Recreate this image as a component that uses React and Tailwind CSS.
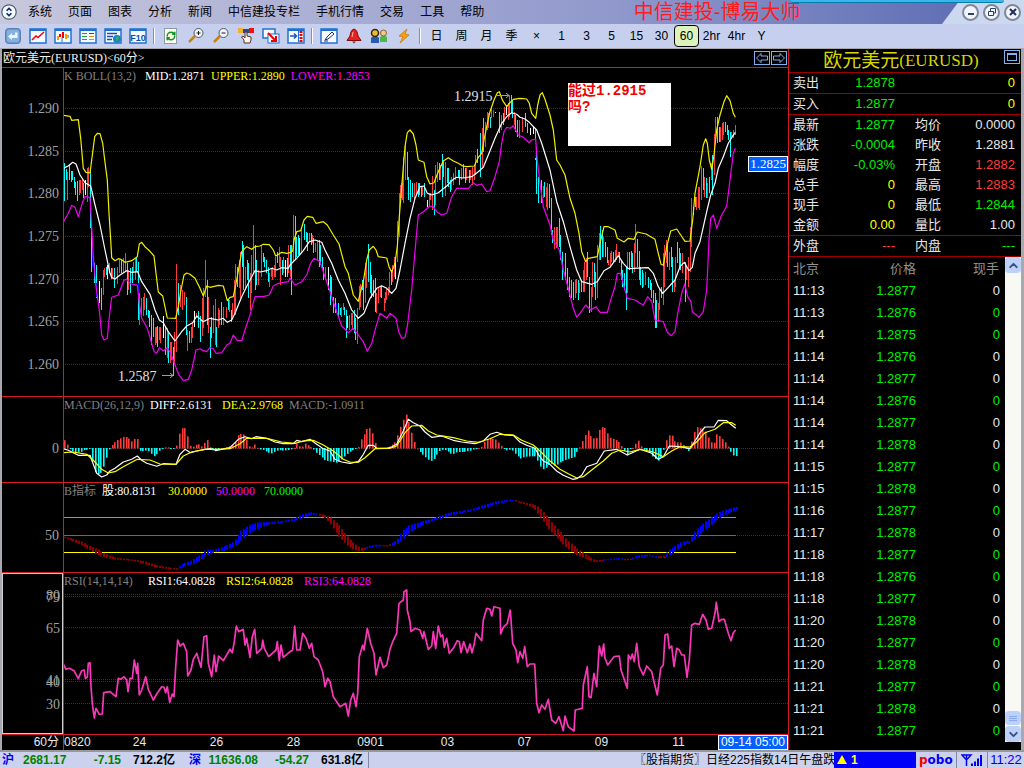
import { RefreshCw, ChevronUp, ChevronDown } from "lucide-react";

const CJK = "font-['Liberation_Sans','Noto_Sans_CJK_SC',sans-serif]";
const SERIF = "font-['Liberation_Serif','Noto_Sans_CJK_SC',serif]";

const RED = "#ff3c3c";
const CYAN = "#00ffff";
const BAR_COLORS = { r: RED, c: CYAN, w: "#ffffff", b: "#0000ff", d: "#900000" };

// Every series is a list of blocks: an origin in screen pixels
// and samples kept at three units per pixel.
const UPPER = [
  [60, 80, "10,106 30,109 35,121 55,119 62,175 70,265 78,277 90,279 95,240 104,170 112,160 120,161 128,190 133,230 142,300 147,400 152,480 155,533 165,542 175,536 182,538 195,547 215,542 232,530 238,492 245,487 255,500 270,514 282,528 288,580 295,636 308,648 322,714 347,715 355,680 362,635 372,585 380,579 390,583 405,595 420,625 430,648 440,618 450,622 475,616 490,618 496,640 502,662 510,652 520,650 530,600 545,515 560,500 575,508 585,500 600,498 610,493 628,494 640,510 647,528 665,517 680,520 690,518"],
  [290, 80, "8,513 12,480 20,455 32,452 42,420 52,409 68,412 78,430 100,425 112,435 130,465 147,492 165,560 175,580 190,645 205,664 213,630 220,605 230,540 238,510 250,499 258,510 265,530 290,534 297,560 305,577 315,550 322,500 328,410 336,310 345,200 352,158 360,150 370,162 378,195 385,240 402,247 410,290 420,312 432,308 445,275 460,243 475,233 490,243 505,250 518,258 530,260 553,258 565,232 575,220 582,180 590,140 600,95 612,60 622,38 628,35 638,62 650,80 658,70 670,58 690,55 710,57 718,70"],
  [500, 80, "95,100 107,115 113,75 120,45 127,38 135,58 150,105 160,150 170,240 180,255 195,285 210,355 225,400 237,460 245,515 257,545 265,535 292,530 300,490 312,440 325,440 345,450 352,475 372,486 385,475 402,478 412,456 438,462 465,478 475,520 483,553 490,556 500,500 512,453 530,447 542,465 555,484 570,483 578,420 585,340 600,260 610,195 617,176 622,190 628,240 635,268 642,225 650,150 660,105 672,65 680,47 690,62 700,100 706,112"],
];

const MID = [
  [60, 80, "10,265 25,258 38,247 48,252 60,285 75,308 92,318 105,375 120,435 135,510 150,580 155,592 165,597 180,585 200,572 215,577 233,575 245,605 270,643 285,690 298,720 310,728 325,755 345,783 365,755 380,738 398,728 410,708 430,725 450,715 475,720 490,715 502,727 515,720 525,700 545,650 565,610 585,572 600,576 620,572 635,565 650,570 665,563 685,565"],
  [290, 80, "0,555 20,535 40,512 58,485 75,480 95,487 105,510 125,550 145,600 165,640 185,690 205,715 222,700 240,655 260,625 275,617 290,625 305,640 318,625 330,570 345,490 360,415 375,355 390,320 402,318 412,340 425,345 445,338 470,318 490,298 500,292 520,294 545,290 565,275 580,262 597,220 615,175 635,130 652,108 665,98 680,103 690,112 705,117 718,127"],
  [500, 80, "110,150 125,190 150,270 170,365 190,425 210,500 230,570 245,605 275,613 292,605 312,572 330,562 355,527 370,550 385,566 445,563 460,580 475,620 488,640 505,622 525,600 540,560 553,547 567,572 577,562 585,520 600,485 620,395 632,345 645,310 655,265 670,230 685,190 697,170 706,157"],
];

const LOWER = [
  [60, 80, "10,427 25,400 35,376 45,382 55,410 68,365 75,350 90,352 95,440 100,530 108,620 118,690 125,765 132,780 142,775 148,710 155,652 175,645 192,600 200,598 212,612 232,615 238,670 245,715 262,745 275,790 283,815 290,820 298,803 310,812 322,803 332,820 345,855 357,885 370,902 385,898 395,870 408,810 420,806 430,812 440,815 450,803 460,806 468,820 485,818 500,795 510,790 520,765 532,782 545,782 555,750 570,705 585,650 610,650 628,645 640,618 655,610 685,605"],
  [290, 80, "0,594 15,615 35,605 50,585 62,550 72,535 90,545 100,575 120,635 140,695 155,738 175,758 190,745 205,765 220,785 232,814 245,790 258,740 270,700 290,715 300,700 318,715 326,755 335,775 345,773 352,740 365,630 378,480 385,405 400,395 420,378 430,380 440,395 455,405 470,400 485,350 500,325 535,325 550,308 560,316 575,312 590,335 600,332 615,290 628,245 635,190 642,155 650,142 660,145 670,137 685,165 700,172 718,188"],
  [500, 80, "95,180 107,177 112,240 120,310 130,380 150,435 160,480 178,510 190,570 205,625 220,685 230,712 240,700 257,675 272,690 288,680 300,697 322,697 335,650 345,620 352,580 362,580 372,620 382,655 405,660 430,676 443,650 455,665 465,720 490,725 502,757 513,767 525,755 533,700 545,640 554,612 563,650 573,665 577,695 597,712 610,695 620,630 627,480 632,415 640,405 650,445 665,405 680,378 690,300 700,220 706,205"],
];

// x, top, bottom, colour
const CANDLES = [
  [60, 80, "10,138,290,c 13,250,362,c 19,268,300,c 22,275,360,r 28,252,300,c 34,272,305,c 37,272,300,c 43,290,325,c 46,305,345,c 52,302,362,c 58,300,345,r 61,300,340,r 67,300,330,r 70,310,355,c 76,300,345,w 82,265,365,r 85,262,320,r 91,270,445,c 94,430,575,c 97,500,560,b 103,550,610,c 109,555,655,c 109,610,650,b 118,603,670,w 124,625,690,c 130,570,645,r 133,565,590,r 139,560,585,c 142,555,598,w 148,550,580,r 154,565,597,c 157,565,597,r 163,565,625,c 172,560,612,r 178,540,580,r 184,540,580,c 190,535,575,r 196,520,575,r 202,550,645,c 205,570,630,r 211,565,640,c 217,560,610,c 220,545,580,r 226,535,600,r 229,530,575,c 235,545,720,c 238,640,735,r 235,610,655,b 243,655,705,r 250,650,708,r 253,640,690,r 259,655,705,c 265,690,715,c 268,693,740,c 274,705,795,c 280,715,770,c 285,740,795,r 289,740,790,r 292,738,802,c 298,740,780,r 301,740,790,r 310,708,775,w 316,740,825,c 322,745,835,r 325,760,848,c 331,785,850,r 334,785,840,r 340,800,888,c 343,755,850,r 349,552,815,r 355,608,705,c 361,615,680,r 367,630,690,r 373,637,675,r 379,650,765,c 382,750,812,r 388,752,790,c 394,740,790,r 397,725,775,r 403,692,740,w 409,700,715,r 415,693,745,c 421,708,785,c 427,655,768,r 430,625,745,r 436,540,650,r 442,600,735,c 445,650,760,r 451,740,833,c 454,710,775,c 460,675,760,r 466,657,795,r 469,740,800,c 475,685,745,r 478,690,735,r 484,665,735,c 490,680,735,r 499,680,715,r 505,658,690,c 508,660,695,r 514,690,725,c 517,670,710,r 523,600,705,r 526,552,705,r 532,560,620,c 538,540,625,r 541,515,655,r 547,483,560,c 550,495,630,c 556,560,625,r 562,540,600,c 565,550,655,c 571,580,690,r 574,525,640,r 580,435,580,r 586,495,630,c 589,540,615,c 595,570,615,r 604,497,590,r 610,520,545,c 613,530,560,c 619,540,580,c 625,560,605,c 628,580,620,r 634,565,590,r 637,560,600,r 643,555,590,r 646,530,590,r 652,515,550,c 658,500,560,r 661,530,615,r 667,540,585,c 670,530,580,r 676,540,590,w 682,535,590,c 685,495,580,r 691,500,590,r 694,495,645,c"],
  [290, 80, "1,495,570,c 4,520,645,c 10,405,545,r 16,408,540,c 19,470,530,c 25,465,525,c 28,475,525,w 34,445,520,r 43,432,480,c 49,455,485,c 52,460,512,c 58,460,485,r 64,460,495,c 67,465,490,r 70,475,520,c 76,490,515,r 82,480,540,r 88,480,560,c 91,495,555,c 97,530,570,c 100,560,600,c 106,560,600,r 115,560,630,w 121,585,675,c 124,590,645,c 130,650,700,c 136,655,700,c 139,670,690,b 145,670,710,c 151,685,705,c 154,680,710,r 160,670,690,r 163,680,705,c 169,690,775,c 172,708,745,w 178,705,750,r 184,700,735,r 187,700,750,r 193,690,760,c 196,715,780,c 202,685,792,r 208,618,690,r 211,612,680,r 217,600,630,c 220,605,690,c 226,550,670,r 229,545,625,r 235,492,605,c 241,545,640,c 244,585,655,c 250,600,650,c 256,595,695,c 259,640,700,r 265,625,670,r 271,620,650,r 275,618,655,c 283,655,692,r 286,635,670,r 289,628,660,r 295,620,645,r 298,575,640,r 304,570,615,c 307,555,605,r 313,530,590,r 316,530,598,w 322,423,545,r 328,340,470,r 331,315,355,r 334,310,355,r 337,300,360,r 340,232,370,r 346,195,300,r 352,215,300,c 355,290,360,c 361,300,365,c 367,310,350,c 373,310,362,r 379,305,345,r 385,310,350,c 388,310,345,c 394,320,350,c 397,320,345,r 403,310,350,c 412,360,380,w 418,340,378,r 421,340,360,r 427,288,390,r 433,330,405,c 436,255,375,r 442,245,305,r 448,250,300,c 451,255,300,r 457,222,350,c 460,240,290,c 466,245,348,r 472,265,310,c 475,265,320,c 481,300,335,c 484,290,330,r 490,280,315,r 496,262,300,r 505,270,290,c 508,270,315,c 514,265,300,r 520,252,295,c 526,265,310,c 529,265,300,r 538,270,310,c 541,270,300,r 547,260,315,r 553,255,300,r 556,225,285,r 562,208,250,c 571,160,290,c 577,145,260,r 580,113,215,c 586,125,200,r 592,95,150,r 595,100,145,r 601,110,145,c 604,80,115,r 610,90,110,r 616,96,99,w 628,95,160,c 634,105,150,r 640,100,135,c 643,80,125,r 649,78,105,w 655,68,120,r 658,45,110,r 664,45,98,c 667,60,115,c 673,95,135,r 676,105,155,c 682,120,170,c 688,120,175,r 697,110,155,r 706,100,140,c"],
  [500, 80, "83,130,160,c 91,145,165,w 100,140,163,w 107,145,240,c 107,180,235,b 109,200,342,c 115,290,370,c 123,300,370,c 130,318,355,r 133,305,350,c 139,320,380,r 142,310,390,r 148,312,385,c 154,355,465,c 157,450,490,c 163,440,508,r 169,440,505,r 172,440,500,r 178,415,500,c 181,465,540,c 187,515,600,c 190,550,575,b 196,520,600,c 202,565,630,c 208,590,650,c 214,600,655,c 220,605,660,c 226,600,655,r 229,598,640,r 235,600,660,c 238,610,640,r 244,600,635,c 250,570,635,r 253,545,635,r 259,535,600,r 262,515,590,c 268,590,700,c 274,620,695,r 277,545,650,r 283,550,620,c 286,575,660,c 292,495,655,r 298,460,540,r 301,438,540,c 307,450,530,c 310,470,530,r 316,485,530,c 322,500,550,c 325,540,555,r 331,520,560,r 334,512,545,r 340,515,550,c 346,510,545,r 349,492,540,r 355,515,530,r 358,515,550,c 364,540,600,c 367,570,620,c 373,580,630,c 379,560,690,c 382,515,640,r 388,515,570,c 394,512,560,c 397,520,580,c 403,490,575,r 406,432,520,r 412,478,560,c 418,512,600,c 421,560,615,c 427,570,625,c 430,580,620,r 436,575,615,r 445,590,625,c 451,600,630,c 454,610,655,c 460,630,670,c 466,638,743,c 469,660,745,c 475,670,725,r 478,625,690,r 484,620,655,c 490,520,675,r 493,495,620,r 499,480,550,r 502,485,560,c 508,515,570,r 514,500,560,c 517,530,635,c 523,600,635,r 526,530,620,r 532,487,550,c 538,505,560,c 541,520,570,c 547,520,580,r 556,545,665,c 559,560,600,r 565,530,620,r 571,440,575,r 574,355,500,r 580,380,405,w 586,350,380,c 589,350,390,r 595,320,385,r 598,320,390,r 604,258,360,r 610,265,330,c 613,290,350,r 619,295,355,c 622,310,355,r 628,290,340,c 634,250,300,r 637,225,345,c 643,163,285,r 646,110,190,r 652,110,190,c 658,140,185,c 661,140,185,r 667,130,180,r 670,125,165,r 676,125,155,c 682,135,165,c 685,150,180,c 691,155,230,c 694,155,175,r 700,150,175,r 706,135,165,r"],
];

// x, signed height around the zero line
const MACD = [
  [0, 0, "192,25 200,12 206,3 215,-8 225,-14 240,-13 250,-6 262,-5 270,-2 276,-40 285,-75 297,-80 303,-72 312,-50 322,-15 330,5 342,18 355,28 372,37 385,30 395,20 403,30 412,28 418,-8 430,-10 440,-6 450,-15 460,-25 470,-18 480,-5 490,3 500,4 508,2 515,-3 527,-2 530,30 538,48 547,65 555,60 562,35 570,8 580,5 592,16 602,5 610,12 618,32 625,12 633,-5 645,-10 655,-5 665,2 675,2 690,8 702,10 710,38 718,44 730,42 740,22 750,-2 765,14 775,-4 790,-6 800,-12 812,-17 825,-10 835,-6 850,-8 865,-6 880,-2 885,22 893,8 905,5 915,15 925,8 935,2 945,-12 960,-24 975,-38 990,-40 1010,-45 1020,-38 1035,-22 1050,-10 1065,-3 1075,5 1078,20 1085,32 1095,50 1103,66 1112,56 1120,35 1128,2 1150,-2 1160,2"],
  [390, 0, "0,8 15,20 25,50 35,80 48,104 55,80 65,42 75,10 85,-8 95,-18 108,-30 120,-40 132,-32 145,-10 160,-4 175,-12 185,-20 200,-12 220,-12 240,-8 260,0 272,2 280,18 290,28 305,30 318,26 330,10 342,-4 352,-8 362,-3 375,-18 390,-32 405,-26 425,-25 438,-25 445,-50 457,-64 470,-58 480,-45 495,-55 505,-45 520,-38 535,-32 550,-28 560,-10 568,4 575,20 585,42 592,55 605,30 618,32 628,60 640,68 650,48 660,32 672,28 685,20 695,5 705,-15 712,-24 720,2 730,2 742,28 750,10 760,-5 775,-12 790,-30 803,-38 815,-25 822,5 832,38 843,42 855,18 870,18 885,5 892,-18 900,5 908,40 918,65 935,58 945,52 960,20 970,15 980,45 990,35 1005,18 1015,2 1023,-15 1032,-25 1037,-24"],
];

const DIFF = [
  [0, 396, "190,158 205,163 235,178 270,178 280,205 290,232 305,243 320,237 330,225 345,217 370,198 395,190 412,180 425,193 440,202 470,211 490,203 528,205 540,175 555,160 572,170 590,165 615,160 630,158 650,163 690,155 715,130 735,122 755,128 768,122 800,127 825,138 850,143 880,143 890,133 905,137 930,130 950,145 970,158 990,165 1005,190 1025,198 1050,202 1075,197 1090,175 1105,148 1120,148 1130,157 1160,157"],
  [390, 396, "0,155 20,145 40,105 55,70 70,80 90,90 105,108 125,124 155,120 190,133 215,138 255,143 280,135 300,115 320,109 345,117 370,118 390,138 410,148 435,157 445,175 460,195 480,205 500,225 520,238 548,250 560,248 575,238 590,212 620,202 643,165 680,160 712,177 750,160 785,172 805,190 820,182 838,150 870,152 900,158 915,135 930,110 945,93 972,93 985,73 1010,74 1022,85 1037,97"],
];

const DEA = [
  [0, 396, "190,170 220,168 260,175 285,198 305,220 325,231 345,227 370,212 412,190 450,192 480,204 528,205 550,180 575,168 615,160 650,160 690,158 720,143 740,127 800,127 845,138 885,142 910,135 940,133 970,147 1000,165 1030,190 1050,198 1075,199 1095,185 1125,158 1160,157"],
  [390, 396, "0,157 20,150 45,110 65,90 95,88 115,105 140,117 190,125 230,135 265,139 300,128 330,115 370,117 395,133 430,147 450,165 480,195 510,220 535,233 560,246 580,242 610,218 640,195 665,172 690,162 720,168 750,160 790,168 820,182 845,165 870,152 900,153 920,138 945,110 975,100 1000,80 1025,80 1037,88"],
];

// x, centre, thickness, colour
const TREND = [
  [0, 396, "190,424,4,d 215,432,8,d 240,441,10,d 265,455,12,d 290,468,18,d 315,480,12,d 345,488,5,d 400,493,4,d 430,500,8,d 460,509,8,d 490,515,6,d 525,519,4,d 528,519,5,b 545,508,10,b 570,500,12,b 595,488,18,b 615,470,18,b 640,465,8,b 670,458,14,b 700,445,16,b 720,420,30,b 745,400,26,b 775,388,18,b 800,382,8,b 850,377,5,b 885,370,8,b 905,360,12,b 930,353,8,b 948,354,4,d 975,362,10,d 990,375,20,d 1015,405,34,d 1040,435,28,d 1060,452,20,d 1080,461,10,d 1092,458,5,b 1120,449,6,b 1145,449,4,d 1160,450,4,d"],
  [390, 396, "0,446,6,b 20,438,14,b 35,418,26,b 55,400,24,b 95,382,12,b 130,370,8,b 175,355,9,b 240,343,6,b 285,330,10,b 320,320,9,b 360,313,5,b 372,314,4,d 400,322,6,d 430,332,12,d 445,345,24,d 470,378,32,d 500,413,30,d 530,445,26,d 560,468,20,d 590,485,12,d 615,496,6,d 640,492,4,b 690,488,5,b 700,491,4,d 720,490,4,b 740,482,8,b 780,478,4,b 800,484,5,d 820,482,6,b 835,470,18,b 870,447,16,b 885,438,8,b 895,440,6,b 915,415,26,b 945,388,24,b 980,362,20,b 1000,350,16,b 1037,338,10,b"],
];

const RSI = [
  [0, 570, "190,282 198,298 208,295 222,302 235,326 245,302 253,300 256,325 262,322 265,280 270,278 273,350 277,400 283,444 288,415 298,433 307,432 311,368 330,365 348,380 355,325 362,328 372,320 380,330 384,365 390,325 397,325 403,270 410,310 413,280 418,375 425,360 437,320 445,358 460,390 470,372 485,350 492,352 497,368 502,350 509,397 517,372 522,380 527,290 533,210 540,228 550,220 560,245 563,318 573,300 580,268 590,250 597,272 603,292 612,200 620,197 625,280 635,320 643,255 648,305 656,258 670,272 690,238 697,248 703,215 709,168 716,185 730,178 735,225 740,205 750,262 757,200 764,178 770,250 785,235 788,210 793,235 806,260 828,240 832,215 838,272 843,225 850,262 870,245 878,240 884,168 890,240 900,240 908,190 918,205 928,235 935,220 942,260 955,270 968,305 975,350 983,325 990,335 1000,380 1020,410 1037,400 1045,438 1052,390 1060,370 1068,410 1073,370 1078,260 1088,225 1092,240 1102,175 1112,220 1122,250 1128,315 1140,262 1150,293 1160,285"],
  [390, 570, "0,238 8,215 20,190 27,100 40,90 42,65 50,60 52,120 60,155 63,185 75,175 90,180 98,205 102,185 115,238 125,228 130,185 137,235 145,168 152,200 158,195 163,232 170,205 178,250 190,235 202,212 208,215 213,248 221,215 232,248 240,222 246,248 252,225 258,190 275,212 280,150 290,115 300,118 305,138 312,110 330,115 332,192 340,172 352,160 361,120 368,220 378,240 383,278 390,245 398,265 404,230 412,290 420,282 434,282 440,400 447,428 455,405 465,418 475,388 485,450 497,460 507,440 520,482 525,438 535,470 552,483 556,420 577,415 580,345 592,290 597,380 603,383 612,310 620,350 628,228 635,258 641,222 645,265 653,285 672,260 688,258 693,300 712,355 715,255 722,268 727,252 733,275 740,220 748,290 760,315 770,288 785,305 792,335 802,375 812,295 820,285 825,195 833,192 838,235 845,228 852,290 860,235 868,240 875,255 883,255 891,322 898,270 905,165 915,160 928,163 938,133 948,150 955,178 965,175 975,130 979,97 987,155 995,148 1003,148 1015,190 1023,212 1030,188 1037,180"],
];

const read = (blocks) =>
  blocks.flatMap(([x0, y0, text]) =>
    text.split(" ").map((item) => {
      const [x, y, ...rest] = item.split(",");
      return [x0 + x / 3, y0 + y / 3, ...rest];
    })
  );

const toPoints = (blocks) => read(blocks).map(([x, y]) => `${x.toFixed(1)},${y.toFixed(1)}`).join(" ");

function resample(rows, valueOf) {
  const out = [];
  let i = 0;
  for (let k = 0; k < 241; k++) {
    const x = 64 + k * 2.8;
    while (i < rows.length - 2 && rows[i + 1][0] < x) i++;
    const t = Math.min(1, Math.max(0, (x - rows[i][0]) / (rows[i + 1][0] - rows[i][0])));
    out.push({ x: Math.round(x), row: rows[i], values: valueOf(rows[i], rows[i + 1], t) });
  }
  return out;
}

const mix = (a, b, t) => a + (b - a) * t;
const macdBars = resample(read(MACD), (a, b, t) => [mix(a[1], b[1], t)]);
const trendBars = resample(read(TREND), (a, b, t) => [mix(a[1], b[1], t), mix(a[2] / 3, b[2] / 3, t)]);

function Line({ data, color }) {
  return <polyline points={toPoints(data)} fill="none" stroke={color} strokeWidth="1.2" strokeLinejoin="round" />;
}

function Panel({ top, className, legend, ticks, grid, axisClass = "", children, overlay }) {
  return (
    <section className={`relative flex border-b border-[#d81c1c] ${className}`}>
      <svg className={`h-full w-[61px] shrink-0 ${axisClass}`}>
        {ticks.map(([y, label]) => (
          <text
            key={label}
            x="57"
            y={y - top + 5}
            textAnchor="end"
            className={`fill-[#a0a0a0] text-[14px] ${SERIF}`}
          >
            {label}
          </text>
        ))}
      </svg>
      <div className="relative min-w-0 flex-1 border-l border-[#d81c1c]">
        <svg className="absolute inset-0 h-full w-full" shapeRendering="auto">
          {grid.map((y) => (
            <line
              key={y}
              x1="1"
              x2="100%"
              y1={y - top + 0.5}
              y2={y - top + 0.5}
              stroke="#b00000"
              strokeDasharray="1 1"
            />
          ))}
          <g transform={`translate(-64 ${-top})`}>{children}</g>
        </svg>
        <div className={`absolute top-0 left-0 flex gap-[6px] text-[12px] leading-4 whitespace-nowrap ${SERIF}`}>
          {legend.map(([text, color, chars]) => (
            <span key={text} style={{ color, minWidth: (chars || text.length) * 6 }}>
              {text}
            </span>
          ))}
        </div>
        {overlay}
      </div>
    </section>
  );
}

function PricePanel() {
  return (
    <Panel
      top={68}
      className="min-h-[329px] flex-1"
      ticks={[
        [108, "1.290"],
        [151, "1.285"],
        [193, "1.280"],
        [236, "1.275"],
        [279, "1.270"],
        [321, "1.265"],
        [364, "1.260"],
      ]}
      grid={[108, 151, 193, 236, 279, 321, 364]}
      legend={[
        ["K BOLL(13,2)", "#808080", 12.5],
        ["MID:1.2871", "#ffffff"],
        ["UPPER:1.2890", "#ffff00"],
        ["LOWER:1.2853", "#ff00ff"],
      ]}
      overlay={
        <>
          <div className="absolute top-[15px] left-[504px] h-[63px] w-[103px] bg-white font-['Liberation_Mono','Noto_Sans_CJK_SC',monospace] text-[14px] leading-4 font-bold text-[#f00000]">
            能过1.2915
            <br />
            吗?
          </div>
          <div
            className={`absolute top-[88px] right-0 border border-white bg-[#0060ff] px-px text-[13px] leading-[14px] text-white ${SERIF}`}
          >
            1.2825
          </div>
        </>
      }
    >
      {read(CANDLES).map(([x, y, bottom, color], i) => (
        <rect
          key={i}
          x={Math.floor(x)}
          y={y}
          width="1"
          height={80 + bottom / 3 - y}
          fill={BAR_COLORS[color]}
          shapeRendering="crispEdges"
        />
      ))}
      <Line data={UPPER} color="#f0f000" />
      <Line data={MID} color="#ffffff" />
      <Line data={LOWER} color="#f000f0" />
      <text x="454" y="101" className={`fill-[#e0e0e0] text-[14px] ${SERIF}`}>
        1.2915
      </text>
      <path d="M497 95.500H509M506 93L509 95.500L506 98" fill="none" stroke="#a0a0a0" />
      <text x="118" y="381" className={`fill-[#e0e0e0] text-[14px] ${SERIF}`}>
        1.2587
      </text>
      <path d="M162 375.500H173M170 373L173 375.500L170 378" fill="none" stroke="#a0a0a0" />
    </Panel>
  );
}

function MacdPanel() {
  return (
    <Panel
      top={397}
      className="h-[86px]"
      ticks={[[448, "0"]]}
      grid={[448]}
      legend={[
        ["MACD(26,12,9)", "#808080"],
        ["DIFF:2.6131", "#ffffff"],
        ["DEA:2.9768", "#ffff00"],
        ["MACD:-1.0911", "#808080"],
      ]}
    >
      {macdBars.map(({ x, values: [h] }) => (
        <rect
          key={x}
          x={x}
          y={h > 0 ? 448.5 - h : 448}
          width="1.6"
          height={Math.max(1, Math.abs(h))}
          fill={h > 0 ? RED : CYAN}
        />
      ))}
      <Line data={DIFF} color="#ffffff" />
      <Line data={DEA} color="#ffff00" />
    </Panel>
  );
}

function TrendPanel() {
  return (
    <Panel
      top={483}
      className="h-[90px]"
      ticks={[[535, "50"]]}
      grid={[535]}
      legend={[
        ["B指标", "#808080", 5],
        ["股:80.8131", "#ffffff", 10],
        ["30.0000", "#ffff00"],
        ["50.0000", "#ff00ff"],
        ["70.0000", "#00ff00"],
      ]}
    >
      {[
        [517, "#00ff00"],
        [535, "#ff00ff"],
        [552, "#ffff00"],
      ].map(([y, color]) => (
        <rect key={y} x="64" y={y} width="672" height="1" fill={color} />
      ))}
      {trendBars.map(({ x, row, values: [y, h] }) => (
        <rect key={x} x={x} y={y - h / 2} width="2" height={h} fill={BAR_COLORS[row[3]]} />
      ))}
    </Panel>
  );
}

function RsiPanel() {
  return (
    <Panel
      top={573}
      className="h-[162px]"
      axisClass="border border-[#d0d0d0]"
      ticks={[
        [594, "80"],
        [596, "79"],
        [627, "65"],
        [679, "41"],
        [681, "40"],
        [703, "30"],
      ]}
      grid={[594, 596, 627, 679, 681, 703]}
      legend={[
        ["RSI(14,14,14)", "#808080"],
        ["RSI1:64.0828", "#ffffff"],
        ["RSI2:64.0828", "#ffff00"],
        ["RSI3:64.0828", "#ff00ff"],
      ]}
    >
      <polyline points={toPoints(RSI)} fill="none" stroke="#f838b8" strokeWidth="1.7" strokeLinejoin="round" />
    </Panel>
  );
}

function TimeAxis() {
  return (
    <div className={`flex h-[15px] shrink-0 text-[12px] leading-[15px] text-[#e8e8e8] ${CJK}`}>
      <span className="w-[62px] shrink-0 border-r border-[#d81c1c] pr-1 text-right">60分</span>
      <span className="w-[37px] shrink-0">0820</span>
      {["24", "26", "28", "0901", "03", "07", "09", "11"].map((day) => (
        <span key={day} className="w-[77px] shrink-0 text-center">
          {day}
        </span>
      ))}
      <span className="relative -ml-4 flex-1 text-right">
        <span className="absolute top-0 right-0 border border-white bg-[#0060ff] px-[2px] leading-[13px] whitespace-nowrap text-white">
          09-14 05:00
        </span>
      </span>
    </div>
  );
}

function ChartWindow() {
  return (
    <main className="flex min-w-0 flex-1 flex-col border-r border-[#d81c1c] bg-black">
      <header className="flex h-[19px] shrink-0 items-center justify-between border-b border-[#d81c1c] pl-px">
        <h1 className={`text-[12px] leading-4 text-[#f0f0f0] ${SERIF}`}>欧元美元(EURUSD)&lt;60分&gt;</h1>
        <div className="flex gap-px pr-px">
          <button aria-label="Previous" className="h-[14px] w-4 border border-[#80b0f0]">
            <svg viewBox="0 0 14 12" className="h-full w-full fill-none stroke-[#80b0f0]">
              <path d="M1.500 6L6 1.500V4H12.500V8H6V10.500Z" />
            </svg>
          </button>
          <button aria-label="Next" className="h-[14px] w-4 border border-[#80b0f0]">
            <svg viewBox="0 0 14 12" className="h-full w-full fill-none stroke-[#80b0f0]">
              <path d="M12.500 6L8 1.500V4H1.500V8H8V10.500Z" />
            </svg>
          </button>
        </div>
      </header>
      <PricePanel />
      <MacdPanel />
      <TrendPanel />
      <RsiPanel />
      <TimeAxis />
    </main>
  );
}

const QUOTES = [
  ["最新", "1.2877", "text-[#00f000]", "均价", "0.0000", "text-[#e8e8e8]"],
  ["涨跌", "-0.0004", "text-[#00f000]", "昨收", "1.2881", "text-[#e8e8e8]"],
  ["幅度", "-0.03%", "text-[#00f000]", "开盘", "1.2882", "text-[#ff3c3c]"],
  ["总手", "0", "text-[#ffff00]", "最高", "1.2883", "text-[#ff3c3c]"],
  ["现手", "0", "text-[#ffff00]", "最低", "1.2844", "text-[#00f000]"],
  ["金额", "0.00", "text-[#ffff00]", "量比", "1.00", "text-[#e8e8e8]"],
];

const TICKS = [
  ["11:13", "1.2877"],
  ["11:13", "1.2876"],
  ["11:14", "1.2875"],
  ["11:14", "1.2876"],
  ["11:14", "1.2877"],
  ["11:14", "1.2876"],
  ["11:14", "1.2877"],
  ["11:14", "1.2878"],
  ["11:15", "1.2877"],
  ["11:15", "1.2878"],
  ["11:16", "1.2877"],
  ["11:17", "1.2878"],
  ["11:18", "1.2877"],
  ["11:18", "1.2876"],
  ["11:18", "1.2877"],
  ["11:20", "1.2878"],
  ["11:20", "1.2877"],
  ["11:20", "1.2878"],
  ["11:21", "1.2877"],
  ["11:21", "1.2878"],
  ["11:21", "1.2877"],
];

function QuoteRow({ row: [a, av, ac, b, bv, bc] }) {
  return (
    <tr className="h-5">
      <th className="w-[44px] pl-1 text-left font-normal">{a}</th>
      <td className={`w-[62px] text-right ${ac}`}>{av}</td>
      <th className="w-[52px] pl-5 text-left font-normal">{b}</th>
      <td className={`pr-[6px] text-right ${bc}`}>{bv}</td>
    </tr>
  );
}

function QuotePanel() {
  return (
    <aside
      className={`flex w-[232px] shrink-0 flex-col bg-black text-[13px] leading-5 whitespace-nowrap text-[#e8e8e8] ${CJK}`}
    >
      <div className="relative flex h-6 shrink-0 items-center justify-center border-b border-[#a00000] pr-4 pl-2 text-[#d8d800]">
        <h2 className={`flex items-center text-[19px] leading-5 ${SERIF}`}>
          欧元美元<span className="text-[17px]">(EURUSD)</span>
        </h2>
        <button
          aria-label="Maximize panel"
          className="absolute top-[1px] right-[1px] flex h-[14px] w-4 items-center justify-center border border-[#80b0f0]"
        >
          <span className="h-2 w-[10px] border border-t-2 border-[#80b0f0]" />
        </button>
      </div>
      {[
        ["卖出", "1.2878"],
        ["买入", "1.2877"],
      ].map(([name, price]) => (
        <div key={name} className="flex h-[21px] shrink-0 border-b border-[#a00000] pr-[6px] pl-1">
          <span className="w-10">{name}</span>
          <span className="w-[62px] text-right text-[#00f000]">{price}</span>
          <span className="flex-1 text-right text-[#ffff00]">0</span>
        </div>
      ))}
      <table className="w-full shrink-0 table-fixed border-b border-[#a00000]">
        <tbody>
          {QUOTES.map((row) => (
            <QuoteRow key={row[0]} row={row} />
          ))}
        </tbody>
      </table>
      <table className="w-full shrink-0 table-fixed border-b border-[#a00000]">
        <tbody>
          <QuoteRow row={["外盘", "---", "text-[#ff3c3c]", "内盘", "---", "text-[#00f000]"]} />
        </tbody>
      </table>
      <div className="flex min-h-0 flex-1">
        <div className="flex-1">
          <table className="w-full table-fixed">
            <thead>
              <tr className="h-[23px] text-[#909090]">
                <th className="w-[54px] pl-1 text-left font-normal">北京</th>
                <th className="w-[73px] text-right font-normal">价格</th>
                <th className="pr-[6px] text-right font-normal">现手</th>
              </tr>
            </thead>
            <tbody>
              {TICKS.map(([time, price], i) => (
                <tr key={i} className="h-[22px]">
                  <td className="pl-1">{time}</td>
                  <td className="text-right text-[#00f000]">{price}</td>
                  <td
                    className={`pr-[5px] text-right ${
                      i === 0 || price > TICKS[i - 1][1] ? "text-[#e8e8e8]" : "text-[#00f000]"
                    }`}
                  >
                    0
                  </td>
                </tr>
              ))}
            </tbody>
          </table>
        </div>
        <div className="mb-2 flex w-4 flex-col bg-[#f8f8f4]">
          <button aria-label="Scroll up" className="flex h-4 items-center justify-center rounded-sm bg-[#bcd0f8] text-[#385080]">
            <ChevronUp size={13} strokeWidth={3.5} />
          </button>
          <div className="flex flex-1 flex-col justify-end pb-px">
            <div className="flex h-[14px] flex-col items-center justify-center gap-px rounded-sm bg-[#bcd0f8]">
              <i className="h-px w-2 bg-[#88a8f0]" />
              <i className="h-px w-2 bg-[#88a8f0]" />
              <i className="h-px w-2 bg-[#88a8f0]" />
            </div>
          </div>
          <button aria-label="Scroll down" className="flex h-4 items-center justify-center rounded-sm bg-[#bcd0f8] text-[#385080]">
            <ChevronDown size={13} strokeWidth={3.5} />
          </button>
        </div>
      </div>
    </aside>
  );
}

function TitleBar() {
  return (
    <div
      className={`relative flex h-6 shrink-0 items-center bg-linear-to-r from-[#c8c8dc] via-[#9098cc] via-60% to-[#5868b0] ${CJK}`}
    >
      <svg viewBox="0 0 20 20" className="mx-[1px] h-4 w-4 shrink-0">
        <circle cx="10" cy="10" r="9" fill="#f4f8ff" stroke="#506078" strokeWidth="1.500" />
        <path d="M7 8.500L10 5.500L13 8.500M7 11.500L10 14.500L13 11.500" fill="none" stroke="#102860" strokeWidth="2" />
      </svg>
      <nav className="ml-[10px] flex gap-4 text-[12px] whitespace-nowrap text-black">
        {["系统", "页面", "图表", "分析", "新闻", "中信建投专栏", "手机行情", "交易", "工具", "帮助"].map((item) => (
          <button key={item}>{item}</button>
        ))}
      </nav>
      <div className="flex-1 pl-2 text-center text-[20px] leading-6 whitespace-nowrap text-[#ff1c1c]">
        中信建投-博易大师
      </div>
      <div className="flex h-full w-[82px] shrink-0 items-center justify-end gap-[4px] bg-[#ccd8f0] pr-[3px] [clip-path:polygon(18px_0,100%_0,100%_100%,0_100%)]">
        <button aria-label="Minimize" className="flex h-[17px] w-[17px] items-center justify-center rounded-full border-2 border-[#808898] bg-[#f0f4fc]">
          <i className="mt-1 h-[2px] w-[6px] bg-[#304060]" />
        </button>
        <button aria-label="Restore" className="flex h-[17px] w-[17px] items-center justify-center rounded-full border-2 border-[#808898] bg-[#f0f4fc]">
          <svg viewBox="0 0 10 10" className="h-[10px] w-[10px] fill-none stroke-[#304060]">
            <path d="M3.500 4V1.500H8.500V6H6.500M1.500 4.500H6.500V8.500H1.500Z" />
          </svg>
        </button>
        <button aria-label="Close" className="flex h-[17px] w-[17px] items-center justify-center rounded-full border-2 border-[#808898] bg-[#f0f4fc]">
          <svg viewBox="0 0 10 10" className="h-[10px] w-[10px] fill-none stroke-[#203050] stroke-2">
            <path d="M2 2L8 8M8 2L2 8" />
          </svg>
        </button>
      </div>
      <div className="absolute top-0 right-5 h-[3px] w-[214px] rounded-b border-b border-[#0878b0] bg-[#38b8e8]" />
    </div>
  );
}

function Frame({ children }) {
  return (
    <svg viewBox="0 0 18 16" className="h-4 w-[18px]">
      <rect x="1" y="1" width="16" height="14" fill="#f4faff" stroke="#2070d0" strokeWidth="1.500" />
      <path d="M1 2H17" stroke="#2070d0" strokeWidth="2" />
      {children}
    </svg>
  );
}

const TOOLS = [
  [
    ["Back", <svg viewBox="0 0 16 16" className="h-4 w-4">
      <rect x="0.500" y="0.500" width="15" height="15" rx="3" fill="#6898d0" stroke="#5880b0" />
      <rect x="2" y="2" width="12" height="12" rx="2" fill="#88b0dc" />
      <path d="M3 8.500L7 5V7H10V4.500H12.500V10H7V12Z" fill="#e8f4ff" />
    </svg>],
    ["Trend", <Frame><path d="M3 12L7 8L9 9.500L15 4" fill="none" stroke="#f00000" strokeWidth="1.500" /></Frame>],
    ["Candles", <Frame>
      <path d="M9 4V10M6 6V9" stroke="#f00000" strokeWidth="2" />
      <path d="M4 8V12M12 6V11" stroke="#f0a000" strokeWidth="2" />
      <path d="M8 10V14M14 7V10" stroke="#2070d0" />
    </Frame>],
    ["Quotes", <Frame>
      <path d="M3 5.500H8M3 8.500H8M3 11.500H8" stroke="#20a040" />
      <path d="M10 5.500H15" stroke="#f00000" />
      <path d="M10 8.500H15M10 11.500H15" stroke="#e09000" />
    </Frame>],
    ["News", <Frame>
      <path d="M3 5.500H13M3 8.500H9M3 11.500H8" stroke="#2050a0" strokeWidth="1.500" />
      <circle cx="13" cy="11" r="4" fill="#2080c0" />
      <path d="M11 10L14 8L15 11L13 13Z" fill="#30b050" />
    </Frame>],
    ["F10", <Frame>
      <text x="9" y="12.500" textAnchor="middle" fill="#1050a0" className="font-['Liberation_Sans',sans-serif] text-[9px] font-bold">
        F10
      </text>
    </Frame>],
  ],
  [
    ["Refresh", <span className="flex h-4 w-[13px] items-center justify-center border border-[#88a0a0] bg-[#fffff0] text-[#109020]"><RefreshCw size={10} strokeWidth={3.500} /></span>],
    ["Zoom in", <svg viewBox="0 0 18 18" className="h-[18px] w-[18px]">
      <path d="M2 15L8 9" stroke="#c88010" strokeWidth="2.500" />
      <circle cx="11.500" cy="6" r="4.500" fill="#f0f4f8" stroke="#505860" />
      <path d="M9.500 6H13.500M11.500 4V8" stroke="#202020" />
    </svg>],
    ["Zoom out", <svg viewBox="0 0 18 18" className="h-[18px] w-[18px]">
      <path d="M2 15L8 9" stroke="#c88010" strokeWidth="2.500" />
      <circle cx="11.500" cy="6" r="4.500" fill="#f0f4f8" stroke="#505860" />
      <path d="M9.500 6H13.500" stroke="#202020" />
    </svg>],
    ["Pick", <svg viewBox="0 0 18 18" className="h-[18px] w-[18px]">
      <path d="M1 1H6V6H1Z" fill="#f0b030" />
      <path d="M6 2H12V6H6Z" fill="#304880" />
      <path d="M12 1H17V6H12Z" fill="#f01010" />
      <path d="M7 16V13L4.500 10L6 9L8 11V5H10V9L14 10V13L13 16Z" fill="#fff4e8" stroke="#503028" />
    </svg>],
    ["Shrink", <svg viewBox="0 0 18 18" className="h-[18px] w-[18px]">
      <rect x="1" y="2" width="12" height="9" fill="#f4faff" stroke="#2070d0" strokeWidth="1.500" />
      <rect x="6" y="7" width="11" height="9" fill="#f4faff" stroke="#2070d0" />
      <path d="M6 6L14 14M14 9V14H9" fill="none" stroke="#f00000" strokeWidth="2" />
    </svg>],
    ["Dock", <Frame>
      <path d="M3 8H9M7 5.500L9.500 8L7 10.500" fill="none" stroke="#2050c0" strokeWidth="1.500" />
      <path d="M14 3V14" stroke="#f00000" strokeWidth="3" strokeDasharray="2 1" />
      <path d="M11.500 3V14" stroke="#2070d0" />
    </Frame>],
  ],
  [
    ["Draw", <Frame><path d="M5 12L7 9L12 4L14 6L8 11Z" fill="#ffffff" stroke="#203070" /><path d="M4 13H8" stroke="#203070" /></Frame>],
    ["Alert", <svg viewBox="0 0 16 16" className="h-4 w-4">
      <path d="M8 1C5 2 4.500 5 4 8L1 12.500H15L12 8C11.500 5 11 2 8 1Z" fill="#e82020" stroke="#800808" />
      <path d="M6 13.500H10L8 15.500Z" fill="#803010" />
      <path d="M7 4L6 9" stroke="#ffb0a0" />
    </svg>],
    ["Accounts", <svg viewBox="0 0 18 16" className="h-4 w-[18px]">
      <path d="M10 14V9C11 7.500 16 7.500 17 9V14Z" fill="#48b848" />
      <circle cx="13.500" cy="5" r="3" fill="#f0c890" stroke="#906030" />
      <path d="M1 15V10C2 8 8 8 9 10V15Z" fill="#2858b0" />
      <circle cx="5" cy="5" r="3.500" fill="#f0b830" stroke="#302818" strokeWidth="1.500" />
    </svg>],
    ["Flash", <svg viewBox="0 0 16 16" className="h-4 w-4">
      <path d="M11 1L3 8L7 9L4 15L13 7L9 6Z" fill="#f8a010" stroke="#c87000" strokeWidth="0.700" />
    </svg>],
  ],
];

const PERIODS = ["日", "周", "月", "季", "×", "1", "3", "5", "15", "30", "60", "2hr", "4hr", "Y"];

function Toolbar() {
  return (
    <div className={`flex h-6 shrink-0 items-center bg-[#c6d0ee] text-[12px] text-black ${CJK}`}>
      {TOOLS.map((group, i) => (
        <div key={i} className="flex items-center">
          {group.map(([label, icon]) => (
            <button key={label} aria-label={label} className="flex w-[25px] items-center justify-center">
              {icon}
            </button>
          ))}
          <span className="mr-[3px] ml-[3px] h-4 w-[2px] border-l border-[#8890a8] bg-white" />
        </div>
      ))}
      {PERIODS.map((period) => (
        <button
          key={period}
          className={`h-[22px] w-[25px] text-center ${
            period === "60" ? "rounded border border-black bg-[#dcf4bc]" : ""
          }`}
        >
          {period}
        </button>
      ))}
    </div>
  );
}

function StatusBar() {
  return (
    <footer
      className={`flex h-[18px] shrink-0 items-center border-t-2 border-[#989898] bg-[#ccd2ee] text-[12px] leading-4 whitespace-nowrap text-black ${CJK}`}
    >
      <b className="w-[23px] pl-[2px] text-[#0000f0]">沪</b>
      <b className="w-[46px] text-[#008000]">2681.17</b>
      <b className="w-[52px] text-right text-[#008000]">-7.15</b>
      <b className="w-[54px] text-right">712.2亿</b>
      <b className="w-[31px] pl-[14px] text-[#0000f0]">深</b>
      <b className="w-[52px] text-right text-[#008000]">11636.08</b>
      <b className="w-[51px] text-right text-[#008000]">-54.27</b>
      <b className="w-[54px] text-right">631.8亿</b>
      <span className="ml-[5px] h-4 w-px bg-[#8088a8]" />
      <span className="flex min-w-0 flex-1 justify-end overflow-hidden">
        <span className="w-[200px] overflow-hidden">〖股指期货〗日经225指数14日午盘跌</span>
      </span>
      <span className="flex h-full w-[82px] items-center gap-1 bg-[#0000f8] pl-[3px] font-bold text-[#ffff40]">
        <svg viewBox="0 0 10 10" className="h-[10px] w-[10px]">
          <path d="M5 0L10 9H0Z" fill="#ffff00" />
        </svg>
        1
      </span>
      <b className="w-[40px] pl-[3px] font-['DejaVu_Sans',sans-serif] text-[12px] text-[#0000f0]">
        <span className="text-[#f00000]">p</span>obo
      </b>
      <span className="flex h-full w-[32px] items-center justify-center border-x border-[#8088a8]">
        <svg viewBox="0 0 22 12" className="h-3 w-[22px]">
          <path d="M1 1H10L5.500 6ZM5.500 1V12" fill="none" stroke="#0000f0" strokeWidth="1.500" />
          <path d="M11 12V9.500M14 12V7.500M17 12V4.500M20 12V1" stroke="#0000f0" strokeWidth="2" />
        </svg>
      </span>
      <time className="w-[36px] text-center text-[13px] text-[#0000f0]">11:22</time>
    </footer>
  );
}

export default function App() {
  return (
    <div className="flex min-h-screen flex-col bg-[#c6d0ee]">
      <TitleBar />
      <Toolbar />
      <div className="flex flex-1 border-t border-r-[3px] border-l-2 border-[#a8a8b0]">
        <ChartWindow />
        <QuotePanel />
      </div>
      <StatusBar />
    </div>
  );
}
